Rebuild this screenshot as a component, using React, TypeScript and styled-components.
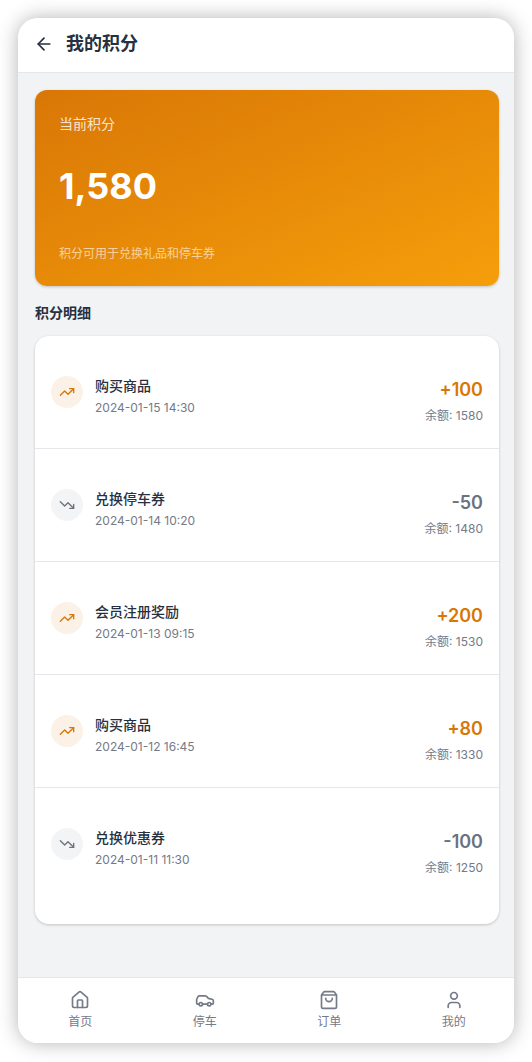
import React from "react";
import styled, { createGlobalStyle } from "styled-components";
import { ArrowLeft, Car, House, ShoppingBag, TrendingDown, TrendingUp, User } from "lucide-react";

const GlobalStyle = createGlobalStyle`
  *, *::before, *::after { box-sizing: border-box; }
  body {
    margin: 0;
    background: #fff;
    color: #263040;
    font-family: Inter, "Noto Sans CJK SC", sans-serif;
    -webkit-font-smoothing: antialiased;
  }
  h1, h2, p, ul { margin: 0; padding: 0; }
  ul { list-style: none; }
`;

const Frame = styled.div`
  display: flex;
  flex-direction: column;
  min-height: calc(100vh - 37px);
  margin: 18px 18px 19px;
  background: #f2f3f5;
  border-radius: 20px;
  overflow: hidden;
  box-shadow: 0 0 20px rgba(0, 0, 0, 0.3);
`;

const Header = styled.header`
  display: flex;
  align-items: center;
  gap: 12px;
  height: 55px;
  padding: 0 16px 2px;
  background: #fff;
  border-bottom: 1px solid #e5e7eb;
`;

const BackButton = styled.button`
  display: flex;
  padding: 0;
  border: 0;
  background: none;
  color: #263040;
  cursor: pointer;
`;

const PageTitle = styled.h1`
  font-size: 18px;
  line-height: 28px;
  font-weight: 600;
`;

const Main = styled.main`
  flex: 1;
  padding: 17px 15px 52px 17px;
`;

const BalanceCard = styled.section`
  display: flex;
  flex-direction: column;
  padding: 24px;
  border-radius: 12px;
  background: linear-gradient(to bottom right, #d97706, #f59e0b);
  box-shadow: 0 1px 3px rgba(0, 0, 0, 0.2);
  color: #fff;
`;

const BalanceLabel = styled.p`
  font-size: 14px;
  line-height: 20px;
  opacity: 0.8;
`;

const BalanceValue = styled.p`
  margin: 32px 0;
  font-size: 36px;
  line-height: 40px;
  font-weight: 700;
`;

const BalanceNote = styled.p`
  margin-top: 8px;
  font-size: 12px;
  line-height: 16px;
  opacity: 0.6;
`;

const SectionTitle = styled.h2`
  margin: 16px 0 12px;
  font-size: 14px;
  line-height: 22px;
  font-weight: 600;
`;

const RecordList = styled.ul`
  padding-bottom: 24px;
  border-radius: 14px;
  background: #fff;
  box-shadow: 0 1px 3px rgba(0, 0, 0, 0.2);
`;

const Record = styled.li`
  display: flex;
  align-items: center;
  gap: 12px;
  height: 113px;
  padding: 0 16px;
  border-bottom: 1px solid #e5e7eb;

  &:last-child {
    height: 112px;
    border-bottom: 0;
  }
`;

const Badge = styled.span<{ $earned: boolean }>`
  display: flex;
  align-items: center;
  justify-content: center;
  width: 32px;
  height: 32px;
  border-radius: 50%;
  background: ${(p) => (p.$earned ? "#fbf1e6" : "#f3f4f6")};
  color: ${(p) => (p.$earned ? "#d97706" : "#6b7280")};
`;

const RecordInfo = styled.div`
  flex: 1;
  padding-top: 8px;
`;

const RecordTitle = styled.p`
  font-size: 14px;
  line-height: 20px;
  font-weight: 500;
`;

const Muted = styled.p`
  font-size: 12px;
  line-height: 16px;
  color: #747a87;
`;

const RecordDate = styled(Muted)`
  margin-top: 4px;
`;

const RecordAmount = styled.div`
  padding-top: 16px;
  text-align: right;
`;

const Amount = styled.p<{ $earned: boolean }>`
  font-size: 18px;
  line-height: 28px;
  font-weight: 600;
  color: ${(p) => (p.$earned ? "#d97706" : "#6b7280")};
`;

const Balance = styled(Muted)`
  margin-top: 4px;
`;

const TabBar = styled.nav`
  display: grid;
  grid-template-columns: repeat(4, 1fr);
  height: 66px;
  margin-right: -2px;
  padding-bottom: 2px;
  background: #fff;
  border-top: 1px solid #e5e7eb;
`;

const Tab = styled.a`
  display: flex;
  flex-direction: column;
  align-items: center;
  justify-content: center;
  gap: 4px;
  color: #747a87;
  font-size: 12px;
  line-height: 16px;
  text-decoration: none;
`;

const records = [
  { title: "购买商品", date: "2024-01-15 14:30", amount: 100, balance: 1580 },
  { title: "兑换停车券", date: "2024-01-14 10:20", amount: -50, balance: 1480 },
  { title: "会员注册奖励", date: "2024-01-13 09:15", amount: 200, balance: 1530 },
  { title: "购买商品", date: "2024-01-12 16:45", amount: 80, balance: 1330 },
  { title: "兑换优惠券", date: "2024-01-11 11:30", amount: -100, balance: 1250 },
];

const tabs = [
  { label: "首页", href: "#home", icon: House },
  { label: "停车", href: "#parking", icon: Car },
  { label: "订单", href: "#orders", icon: ShoppingBag },
  { label: "我的", href: "#profile", icon: User },
];

export default function App() {
  return (
    <>
      <GlobalStyle />
      <Frame>
        <Header>
          <BackButton aria-label="返回">
            <ArrowLeft size={20} />
          </BackButton>
          <PageTitle>我的积分</PageTitle>
        </Header>
        <Main>
          <BalanceCard>
            <BalanceLabel>当前积分</BalanceLabel>
            <BalanceValue>1,580</BalanceValue>
            <BalanceNote>积分可用于兑换礼品和停车券</BalanceNote>
          </BalanceCard>
          <SectionTitle>积分明细</SectionTitle>
          <RecordList>
            {records.map((r) => {
              const earned = r.amount > 0;
              return (
                <Record key={r.date}>
                  <Badge $earned={earned}>
                    {earned ? <TrendingUp size={16} /> : <TrendingDown size={16} />}
                  </Badge>
                  <RecordInfo>
                    <RecordTitle>{r.title}</RecordTitle>
                    <RecordDate>{r.date}</RecordDate>
                  </RecordInfo>
                  <RecordAmount>
                    <Amount $earned={earned}>{earned ? `+${r.amount}` : `${r.amount}`}</Amount>
                    <Balance>{`余额: ${r.balance}`}</Balance>
                  </RecordAmount>
                </Record>
              );
            })}
          </RecordList>
        </Main>
        <TabBar>
          {tabs.map(({ label, href, icon: Icon }) => (
            <Tab key={label} href={href}>
              <Icon size={20} />
              {label}
            </Tab>
          ))}
        </TabBar>
      </Frame>
    </>
  );
}
